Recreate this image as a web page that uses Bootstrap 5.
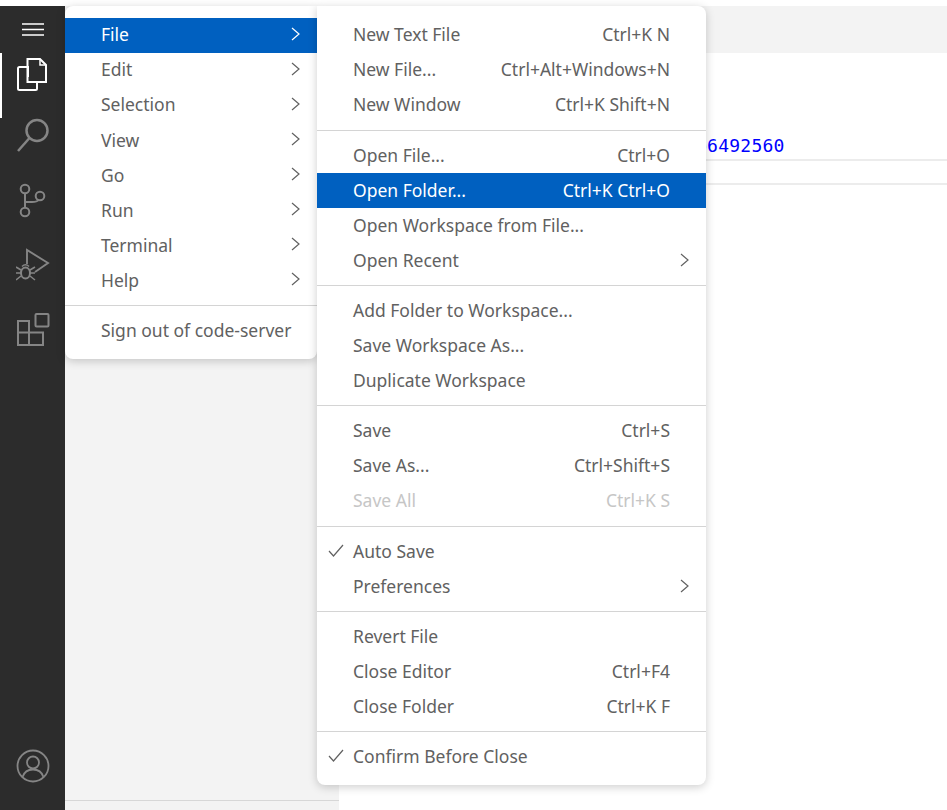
<!doctype html>
<html lang="en">
<head>
<meta charset="utf-8">
<title>code-server menu</title>
<link rel="stylesheet" href="https://cdn.jsdelivr.net/npm/bootstrap@5.3.0/dist/css/bootstrap.min.css">
<style>
html,body{height:810px;overflow:hidden;background:#fff}
body{font-family:"Noto Sans","Open Sans",sans-serif;padding-top:6px}
.shell{height:804px;position:relative}
.actbar{width:65px;background:#2c2c2c;flex:none;color:#858585}
.actbar svg{display:block;fill:none;stroke:currentColor;stroke-width:2}
.burger{height:47px;padding:17px 0 0 22px;color:#fff}
.tool{height:65px;padding-left:16px;position:relative}
.tool.on{color:#fff}
.tool.on::before{content:"";position:absolute;left:0;top:0;bottom:0;width:2px;background:#fff}
.sidepane{width:274px;background:#f3f3f3;flex:none;padding-bottom:5px;border-bottom:0}
.sideline{height:1px;background:#d7d7d7;margin-top:auto;margin-bottom:4px}
.editor{min-width:0}
.tabstrip{height:47px;background:#f3f3f3}
.hashline{margin-top:81px;padding-left:357px;height:27px;font:18px/24px "DejaVu Sans Mono",monospace;letter-spacing:.25px;color:#0000ff;border-bottom:2px solid #ececec;white-space:nowrap}
.emptyline{height:24px;border-bottom:2px solid #ececec}
.vsmenu.dropdown-menu{display:block;position:absolute;top:0;margin:0;padding:11.5px 0 0;border:0;border-radius:0 0 8px 8px;background:#fff;font-size:17.5px;color:#616161;box-shadow:0 2px 10px rgba(0,0,0,.2);min-width:0}
.menu-main{left:65px;width:252px;height:353px;border-radius:8px 0 8px 8px!important;z-index:2}
.menu-sub{left:317px;width:389px;height:779px;border-radius:0 8px 8px 8px!important;z-index:3}
.vsmenu .dropdown-item{display:flex;align-items:center;justify-content:space-between;height:35.1px;padding:0 36px 0 36px;color:#616161;position:relative;line-height:1;white-space:nowrap}
.vsmenu .dropdown-item.hot{background:#0060c0;color:#fff}
.vsmenu .dropdown-item.dim{color:#c6c6c6}
.vsmenu .dropdown-item:hover{background:#0060c0;color:#fff}
.vsmenu .dropdown-divider{margin:7px 0;height:1px;border-top:1px solid #d4d4d4;opacity:1}
.vsmenu .chev{width:9px;height:14px;fill:none;stroke:currentColor;stroke-width:1.2;flex:none}
.menu-main .chev{position:absolute;right:17px;top:9px}
.menu-sub .chev{position:absolute;right:17px;top:10px}
.tick{position:absolute;left:11px;top:10px;width:16px;height:14px;fill:none;stroke:currentColor;stroke-width:1.2}
</style>
</head>
<body>
<div class="shell d-flex">
  <nav class="actbar d-flex flex-column">
    <div class="burger"><svg width="22" height="14" viewBox="0 0 22 14"><path d="M0 1h22M0 6.5h22M0 12h22" stroke-width="1.7"/></svg></div>
    <div class="tool on"><svg width="34" height="40" viewBox="0 0 34 40"><path d="M12 24V14H3.5Q2 14 2 15.500V35.500Q2 37 3.500 37H19.500Q21 37 21 35.500V29" /><path d="M11.500 6H24L30 12V29H11.500Z"/><path d="M24 6V12H30" stroke-width="1.500"/></svg></div>
    <div class="tool"><svg width="36" height="40" viewBox="0 0 36 40"><circle cx="21" cy="12.500" r="10.500" stroke-width="2.500"/><path d="M13.500 20 2 33" stroke-width="2.500"/></svg></div>
    <div class="tool"><svg width="34" height="40" viewBox="0 0 34 40"><circle cx="9" cy="6" r="4.300"/><circle cx="24" cy="13" r="4.300"/><circle cx="9" cy="29" r="4.300"/><path d="M9 10.500V24.500M9 19H16Q21 19 22.500 17"/></svg></div>
    <div class="tool"><svg width="36" height="44" viewBox="0 0 36 44"><path d="M11 16V2L32 15L19 24" stroke-width="1.900"/><ellipse cx="9.500" cy="25" rx="4.500" ry="5.500"/><path d="M6 18.500Q9.500 15 13 18.500M0 19L5 22M19 19L14 22M0 25H5M14 25H19M0 32L5 28M19 32L14 28" stroke-width="1.600"/></svg></div>
    <div class="tool"><svg width="36" height="42" viewBox="0 0 36 42"><rect x="19.500" y="1" width="13" height="12.500" rx="1"/><path d="M2 8H13V19.500H27V32H2ZM2 19.500H13V32" /></svg></div>
    <div class="tool mt-auto" style="height:auto;padding-bottom:27px"><svg width="34" height="34" viewBox="0 0 34 34"><circle cx="17" cy="17" r="15.500" stroke-width="1.800"/><circle cx="17" cy="13.500" r="6" stroke-width="1.800"/><path d="M6.500 28Q9 20.500 17 20.500Q25 20.500 27.500 28" stroke-width="1.800"/></svg></div>
  </nav>

  <aside class="sidepane d-flex flex-column"><div class="sideline"></div></aside>

  <main class="editor flex-grow-1">
    <div class="tabstrip"></div>
    <div class="hashline">b6492560</div>
    <div class="emptyline"></div>
  </main>

  <div class="dropdown-menu show vsmenu menu-main">
    <a class="dropdown-item hot">File<svg class="chev" viewBox="0 0 9 14"><path d="M1 1l7 6-7 6"/></svg></a>
    <a class="dropdown-item">Edit<svg class="chev" viewBox="0 0 9 14"><path d="M1 1l7 6-7 6"/></svg></a>
    <a class="dropdown-item">Selection<svg class="chev" viewBox="0 0 9 14"><path d="M1 1l7 6-7 6"/></svg></a>
    <a class="dropdown-item">View<svg class="chev" viewBox="0 0 9 14"><path d="M1 1l7 6-7 6"/></svg></a>
    <a class="dropdown-item">Go<svg class="chev" viewBox="0 0 9 14"><path d="M1 1l7 6-7 6"/></svg></a>
    <a class="dropdown-item">Run<svg class="chev" viewBox="0 0 9 14"><path d="M1 1l7 6-7 6"/></svg></a>
    <a class="dropdown-item">Terminal<svg class="chev" viewBox="0 0 9 14"><path d="M1 1l7 6-7 6"/></svg></a>
    <a class="dropdown-item">Help<svg class="chev" viewBox="0 0 9 14"><path d="M1 1l7 6-7 6"/></svg></a>
    <hr class="dropdown-divider">
    <a class="dropdown-item">Sign out of code-server</a>
  </div>

  <div class="dropdown-menu show vsmenu menu-sub">
    <a class="dropdown-item"><span>New Text File</span><span>Ctrl+K N</span></a>
    <a class="dropdown-item"><span>New File...</span><span>Ctrl+Alt+Windows+N</span></a>
    <a class="dropdown-item"><span>New Window</span><span>Ctrl+K Shift+N</span></a>
    <hr class="dropdown-divider">
    <a class="dropdown-item"><span>Open File...</span><span>Ctrl+O</span></a>
    <a class="dropdown-item hot"><span>Open Folder...</span><span>Ctrl+K Ctrl+O</span></a>
    <a class="dropdown-item"><span>Open Workspace from File...</span></a>
    <a class="dropdown-item"><span>Open Recent</span><svg class="chev" viewBox="0 0 9 14"><path d="M1 1l7 6-7 6"/></svg></a>
    <hr class="dropdown-divider">
    <a class="dropdown-item"><span>Add Folder to Workspace...</span></a>
    <a class="dropdown-item"><span>Save Workspace As...</span></a>
    <a class="dropdown-item"><span>Duplicate Workspace</span></a>
    <hr class="dropdown-divider">
    <a class="dropdown-item"><span>Save</span><span>Ctrl+S</span></a>
    <a class="dropdown-item"><span>Save As...</span><span>Ctrl+Shift+S</span></a>
    <a class="dropdown-item dim"><span>Save All</span><span>Ctrl+K S</span></a>
    <hr class="dropdown-divider">
    <a class="dropdown-item"><svg class="tick" viewBox="0 0 16 14"><path d="M1 7l4.500 5L15 1"/></svg><span>Auto Save</span></a>
    <a class="dropdown-item"><span>Preferences</span><svg class="chev" viewBox="0 0 9 14"><path d="M1 1l7 6-7 6"/></svg></a>
    <hr class="dropdown-divider">
    <a class="dropdown-item"><span>Revert File</span></a>
    <a class="dropdown-item"><span>Close Editor</span><span>Ctrl+F4</span></a>
    <a class="dropdown-item"><span>Close Folder</span><span>Ctrl+K F</span></a>
    <hr class="dropdown-divider">
    <a class="dropdown-item"><svg class="tick" viewBox="0 0 16 14"><path d="M1 7l4.500 5L15 1"/></svg><span>Confirm Before Close</span></a>
  </div>
</div>
<script src="https://cdn.jsdelivr.net/npm/bootstrap@5.3.0/dist/js/bootstrap.bundle.min.js"></script>
</body>
</html>
